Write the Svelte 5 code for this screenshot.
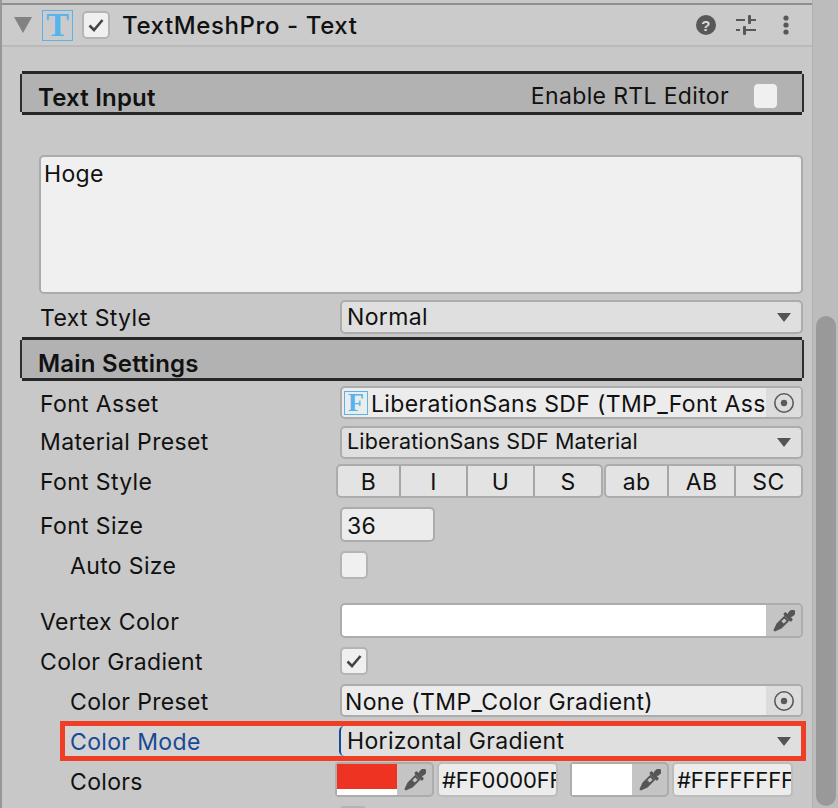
<script>
  const styleGroupA = ['B', 'I', 'U', 'S'];
  const styleGroupB = ['ab', 'AB', 'SC'];
</script>

{#snippet arrow()}
  <svg class="arrow" width="14" height="9" viewBox="0 0 14 9"><path d="M0 0h14L7 9z" fill="#55554f" /></svg>
{/snippet}

{#snippet target()}
  <span class="side">
    <svg width="22" height="22" viewBox="0 0 22 22">
      <circle cx="11" cy="11" r="9.2" fill="none" stroke="#5a5a5a" stroke-width="1.6" />
      <circle cx="11" cy="11" r="3.2" fill="#5a5a5a" />
    </svg>
  </span>
{/snippet}

{#snippet dropper()}
  <svg width="22" height="22" viewBox="0 0 22 22">
    <g transform="rotate(45 11 11)" fill="#555">
      <rect x="8" y="-4" width="6" height="8" rx="3" />
      <rect x="5.500" y="3.500" width="11" height="3.500" rx="1.500" />
      <path fill-rule="evenodd" d="M7.500 7h7v11l-2.500 7h-2l-2.500-7zM9.300 9v4h3.400V9z" />
    </g>
  </svg>
{/snippet}

{#snippet check()}
  <svg width="16" height="14" viewBox="0 0 16 14"><path d="M1.500 7.500l4.500 4.500L14.500 2" fill="none" stroke="#444" stroke-width="2.600" /></svg>
{/snippet}

<div class="inspector">
  <div class="panel">
    <header class="head">
      <svg class="arrow-down" width="18" height="16" viewBox="0 0 18 16"><path d="M0 0h18L9 16z" fill="#828282" /></svg>
      <span class="tmp-icon big">T</span>
      <span class="box head-box">{@render check()}</span>
      <span class="title">TextMeshPro - Text</span>
      <span class="head-tools">
        <svg width="20" height="20" viewBox="0 0 20 20">
          <circle cx="10" cy="10" r="10" fill="#585858" />
          <text x="10" y="15.500" text-anchor="middle" class="q">?</text>
        </svg>
        <svg width="20" height="20" viewBox="0 0 20 20" fill="#585858">
          <rect x="0" y="4" width="9" height="2" /><rect x="12" y="0" width="3" height="9" rx="1" /><rect x="15" y="4" width="5" height="2" />
          <rect x="0" y="14" width="4" height="2" /><rect x="7" y="11" width="3" height="9" rx="1" /><rect x="10" y="14" width="10" height="2" />
        </svg>
        <svg class="dots" width="6" height="20" viewBox="0 0 6 20" fill="#585858">
          <circle cx="3" cy="3" r="2.600" /><circle cx="3" cy="10" r="2.600" /><circle cx="3" cy="17" r="2.600" />
        </svg>
      </span>
    </header>

    <div class="body">
      <div class="bar first">
        <strong>Text Input</strong>
        <span class="rtl">Enable RTL Editor</span>
        <span class="box rtl-box"></span>
      </div>

      <div class="text-area">Hoge</div>

      <div class="row style-row">
        <span class="label">Text Style</span>
        <div class="field drop">Normal {@render arrow()}</div>
      </div>

      <div class="bar main"><strong>Main Settings</strong></div>

      <div class="row asset-row">
        <span class="label">Font Asset</span>
        <div class="field object">
          <span class="object-value"><span class="tmp-icon small">F</span>LiberationSans SDF (TMP_Font Ass</span>
          {@render target()}
        </div>
      </div>

      <div class="row material-row">
        <span class="label">Material Preset</span>
        <div class="field drop material">LiberationSans SDF Material {@render arrow()}</div>
      </div>

      <div class="row font-style-row">
        <span class="label">Font Style</span>
        <div class="toggles">
          <div class="group">
            {#each styleGroupA as item}<span>{item}</span>{/each}
          </div>
          <div class="group second">
            {#each styleGroupB as item}<span>{item}</span>{/each}
          </div>
        </div>
      </div>

      <div class="row size-row">
        <span class="label">Font Size</span>
        <div class="field number">36</div>
      </div>

      <div class="row auto-row">
        <span class="label indent">Auto Size</span>
        <span class="box"></span>
      </div>

      <div class="row vertex-row">
        <span class="label">Vertex Color</span>
        <div class="field color">
          <span class="swatch"></span>
          <span class="side">{@render dropper()}</span>
        </div>
      </div>

      <div class="row gradient-row">
        <span class="label">Color Gradient</span>
        <span class="box">{@render check()}</span>
      </div>

      <div class="row preset-row">
        <span class="label indent">Color Preset</span>
        <div class="field object">
          <span class="object-value plain">None (TMP_Color Gradient)</span>
          {@render target()}
        </div>
      </div>

      <div class="mode-row">
        <span class="label">Color Mode</span>
        <div class="field drop active">Horizontal Gradient {@render arrow()}</div>
      </div>

      <div class="row colors-row">
        <span class="label indent">Colors</span>
        <div class="color-pair">
          <div class="mini-color">
            <span class="mini-swatch red"><i></i></span>
            <span class="mini-side">{@render dropper()}</span>
          </div>
          <div class="hex">#FF0000FF</div>
          <div class="mini-color second">
            <span class="mini-swatch"></span>
            <span class="mini-side">{@render dropper()}</span>
          </div>
          <div class="hex">#FFFFFFFF</div>
        </div>
      </div>

      <span class="box peek"></span>
    </div>
  </div>

  <aside class="scrollbar"><div class="thumb"></div></aside>
</div>

<style>
  :global(body) {
    margin: 0;
    background: #c8c8c8;
  }

  .inspector {
    display: flex;
    width: 838px;
    height: 808px;
    overflow: hidden;
    font-family: Inter, "Liberation Sans", sans-serif;
    font-size: 23px;
    letter-spacing: 0.35px;
    color: #111;
    background: #c8c8c8;
  }

  .panel {
    box-sizing: border-box;
    width: 812px;
    flex: none;
    border-left: 2px solid #989898;
    overflow: hidden;
  }

  .scrollbar {
    flex: 1;
    background: #bcbcbc;
    border-left: 1px solid #b0b0b0;
    padding: 316px 2px 0 3px;
  }

  .thumb {
    height: 490px;
    border-radius: 10px;
    background: #999;
  }

  .head {
    display: flex;
    align-items: center;
    box-sizing: border-box;
    height: 44px;
    margin-top: 3px;
    border-top: 2px solid #8f8f8f;
    border-bottom: 2px solid #bababa;
    background: #cbcbcb;
    padding-left: 12px;
  }

  .tmp-icon {
    display: inline-flex;
    align-items: center;
    justify-content: center;
    box-sizing: border-box;
    border: 1px solid #5ab4ec;
    color: #55b4ec;
    font-family: "Liberation Serif", serif;
    font-weight: 700;
    letter-spacing: 0;
  }

  .tmp-icon.big {
    width: 31px;
    height: 31px;
    margin-left: 10px;
    font-size: 34px;
  }

  .tmp-icon.small {
    width: 24px;
    height: 24px;
    margin-right: 3px;
    font-size: 26px;
    flex: none;
  }

  .box {
    display: inline-flex;
    align-items: center;
    justify-content: center;
    box-sizing: border-box;
    width: 28px;
    height: 28px;
    background: #f0f0f0;
    border: 2px solid #b4b4b4;
    border-radius: 5px;
    flex: none;
  }

  .head-box {
    margin-left: 9px;
  }

  .title {
    margin-left: 12px;
    font-size: 24px;
    font-weight: 500;
    letter-spacing: 0.6px;
  }

  .head-tools {
    display: flex;
    align-items: center;
    gap: 20px;
    margin-left: auto;
    margin-right: 23px;
  }

  .dots {
    margin-left: 7px;
  }

  .q {
    font: 700 15px "Liberation Sans", sans-serif;
    fill: #ddd;
  }

  .body {
    padding-left: 18px;
    width: 784px;
  }

  .bar {
    position: relative;
    display: flex;
    align-items: center;
    box-sizing: border-box;
    height: 44px;
    margin: 0 2px;
    background: #b2b2b2;
    border: solid #272727;
    border-width: 3px 0;
    padding: 6px 24px 0 16px;
  }

  /* side lines sit between the top and bottom rules */
  .bar::before,
  .bar::after {
    content: '';
    position: absolute;
    top: 0;
    bottom: 0;
    width: 2px;
    background: #2e2e2e;
  }

  .bar::before { left: -2px; }
  .bar::after { right: -2px; }

  .bar strong {
    padding-top: 3px;
    font-size: 24px;
    line-height: 28px;
    font-weight: 600;
    letter-spacing: 0.2px;
  }

  .bar.first {
    margin-top: 24px;
  }

  .bar.main {
    margin-top: 3px;
  }

  .rtl {
    margin-left: auto;
  }

  .rtl-box {
    margin-left: 24px;
    border-width: 1px;
    width: 25px;
    height: 26px;
  }

  .text-area {
    box-sizing: border-box;
    height: 139px;
    margin: 40px 1px 0 19px;
    padding: 3px;
    background: #f0f0f0;
    border: 2px solid #ababab;
    border-radius: 5px;
  }

  .row {
    display: flex;
    align-items: center;
    padding: 0 1px 0 20px;
  }

  .label {
    width: 300px;
    flex: none;
    padding-top: 2px;
    line-height: 24px;
  }

  .label.indent {
    box-sizing: border-box;
    padding-left: 30px;
  }

  .material-row .label {
    padding-top: 0;
    padding-bottom: 1px;
  }

  .field {
    box-sizing: border-box;
    display: flex;
    align-items: center;
    flex: 1;
    min-width: 0;
    height: 34px;
    border: 2px solid #acacac;
    border-radius: 5px;
    padding-left: 5px;
    overflow: hidden;
  }

  .drop {
    background: #dfdfdf;
    justify-content: space-between;
  }

  .material {
    height: 33px;
    padding-bottom: 4px;
    font-size: 21.500px;
    letter-spacing: 0.150px;
  }

  .material .arrow {
    position: relative;
    top: 2px;
  }

  .arrow {
    margin-right: 10px;
    flex: none;
  }

  .style-row { margin-top: 6px; }
  .asset-row { margin-top: 5px; }
  .material-row { margin-top: 7px; }
  .font-style-row { margin-top: 5px; }
  .size-row { margin-top: 9px; }
  .auto-row { margin-top: 9px; }
  .vertex-row { margin-top: 24px; }
  .gradient-row { margin-top: 9px; }
  .preset-row { margin-top: 9px; }
  .colors-row { margin-top: 1px; }

  .object {
    height: 33px;
    background: #ececec;
    padding: 0;
  }

  .object-value {
    flex: 1;
    min-width: 0;
    white-space: nowrap;
    overflow: hidden;
    display: flex;
    align-items: center;
    padding: 2px 0 0 2px;
  }

  .object-value .tmp-icon {
    margin-top: -2px;
  }

  .object-value.plain {
    padding-left: 3px;
  }

  .side {
    width: 35px;
    height: 100%;
    flex: none;
    display: flex;
    align-items: center;
    justify-content: center;
    background: #dcdcdc;
  }

  .color {
    padding: 0;
    height: 35px;
    background: #c4c4c4;
  }

  .color .side {
    background: #c4c4c4;
  }

  .swatch {
    flex: 1;
    height: 100%;
    background: #fff;
  }

  .toggles {
    display: flex;
    flex: 1;
    min-width: 0;
    margin-left: -4px;
    gap: 1px;
  }

  .group {
    display: grid;
    grid-template-columns: 61px 67px 67px 1fr;
    box-sizing: border-box;
    width: 267px;
    height: 34px;
    border: 2px solid #acacac;
    border-radius: 5px;
    background: #e3e3e3;
    overflow: hidden;
  }

  .group.second {
    width: 199px;
    grid-template-columns: 61px 67px 1fr;
  }

  .group span {
    display: flex;
    align-items: center;
    justify-content: center;
    padding-top: 1px;
    border-left: 2px solid #a5a5a5;
  }

  .group span:first-child {
    border-left: 0;
  }

  .number {
    flex: none;
    width: 95px;
    height: 35px;
    padding-top: 2px;
    background: #ececec;
  }

  .mode-row {
    display: flex;
    align-items: center;
    box-sizing: border-box;
    height: 40px;
    margin: 4px -2px 0 40px;
    border: 5px solid #ee3f26;
    padding-left: 5px;
    background: #d3d3d3;
  }

  .mode-row .label {
    width: 269px;
    color: #174a96;
  }

  .active {
    height: 30px;
    border: 0;
    border-left: 2px solid #174a96;
    border-radius: 5px 0 0 5px;
    padding-right: 0;
    padding-left: 6px;
  }

  .colors-row .label {
    padding-top: 4px;
  }

  .color-pair {
    display: flex;
    flex: 1;
    margin-left: -5px;
    align-items: center;
  }

  .mini-color {
    display: flex;
    box-sizing: border-box;
    flex: none;
    width: 99px;
    height: 35px;
    border: 2px solid #acacac;
    border-radius: 4px 5px 5px 4px;
    background: #c4c4c4;
  }

  .mini-color.second {
    margin-left: 12px;
  }

  .mini-swatch {
    display: flex;
    flex-direction: column;
    justify-content: flex-end;
    width: 60px;
    background: #fff;
  }

  .mini-swatch.red {
    background: #ee3322;
  }

  .mini-swatch i {
    display: block;
    height: 6px;
    background: #fff;
  }

  .mini-side {
    flex: 1;
    display: flex;
    align-items: center;
    justify-content: center;
  }

  .hex {
    box-sizing: border-box;
    width: 121px;
    height: 35px;
    margin-left: 3px;
    padding: 1px 2px 0 3px;
    background: #ececec;
    border: 2px solid #bcbcbc;
    border-radius: 5px;
    overflow: hidden;
    white-space: nowrap;
    font-size: 22px;
    line-height: 30px;
    letter-spacing: -0.100px;
  }

  .peek {
    display: block;
    margin: 9px 0 0 319px;
  }
</style>
